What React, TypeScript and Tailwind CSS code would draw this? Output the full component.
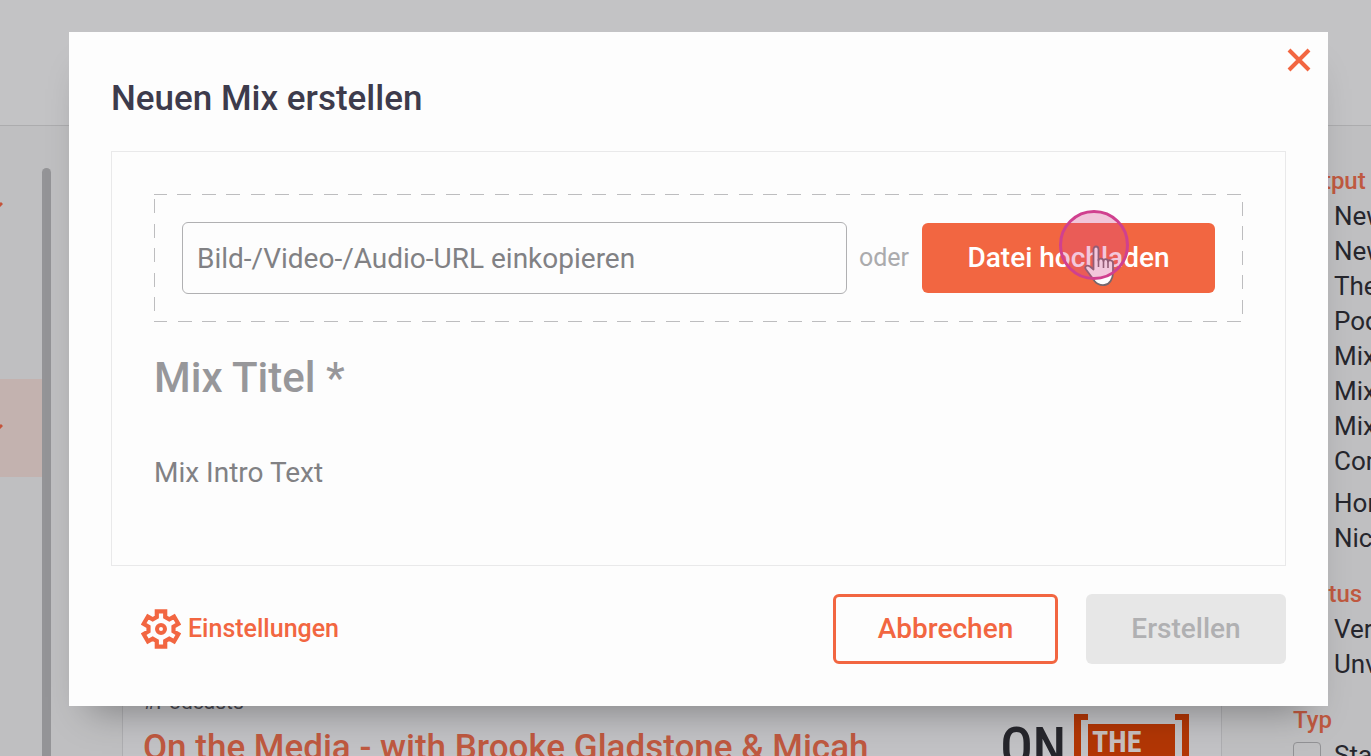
import React, { useState } from "react";

const outputGroups = [
  ["News", "News", "Themen", "Podcasts", "Mix", "Mix", "Mix", "Community"],
  ["Home", "Nicht"],
];

const GEAR_POINTS = [0, 60, 120, 180, 240, 300]
  .flatMap((deg) => {
    const a = (deg * Math.PI) / 180;
    return [
      [-4.2, -12],
      [-4.2, -17.6],
      [4.2, -17.6],
      [4.2, -12],
    ].map(([x, y]) => {
      const px = x * Math.cos(a) - y * Math.sin(a) + 20;
      const py = x * Math.sin(a) + y * Math.cos(a) + 20;
      return `${px.toFixed(1)},${py.toFixed(1)}`;
    });
  })
  .join(" ");

function GearIcon() {
  return (
    <svg
      className="w-10 h-10"
      viewBox="0 0 40 40"
      fill="none"
      stroke="currentColor"
      strokeWidth="4.2"
    >
      <polygon points={GEAR_POINTS} />
      <circle cx="20" cy="20" r="4" strokeWidth="4" />
    </svg>
  );
}

function CloseIcon() {
  return (
    <svg
      className="w-6 h-6"
      viewBox="0 0 24 24"
      fill="none"
      stroke="currentColor"
      strokeWidth="4"
    >
      <path d="M2 2l20 20M22 2L2 22" />
    </svg>
  );
}

function HandCursor() {
  return (
    <svg className="w-8 h-11" viewBox="0 0 32 44">
      <path
        d="M9.500 5.500c0-4 5-4 5 0v11c0-2.500 5-2.500 5 0.500c0-2.500 4.500-2.500 4.500 0.500c0.500-2 5-1.500 5 1.500v9c0 7-3.500 12.500-8.500 13c-4 0.500-7.500-1-10-4c-3-4-5-7-8.500-11.500c-2-3 1-5 4-3l3.500 3z"
        fill="#ffffff"
        stroke="#75676d"
        strokeWidth="1.800"
        strokeLinejoin="round"
      />
      <path d="M14.500 15v8M19.500 16v8M24 17v7" stroke="#75676d" strokeWidth="1.600" />
    </svg>
  );
}

function Chevron() {
  return (
    <svg className="w-3 h-2 -ml-[9px]" viewBox="0 0 12 8" fill="none">
      <path d="M1 1l5 5 5-5" stroke="#c4533a" strokeWidth="3" />
    </svg>
  );
}

function FilterOption({ label }: { label: string }) {
  return (
    <label className="flex items-center gap-[13px] h-[35px]">
      <input
        type="checkbox"
        className="appearance-none shrink-0 w-7 h-7 rounded border border-[#929295]"
      />
      {label}
    </label>
  );
}

function PageBehind() {
  return (
    <div className="h-full flex flex-col bg-[#bfbfc1]">
      <header className="h-[126px] shrink-0 bg-[#c3c3c5] border-b border-[#acacae]" />

      <div className="flex flex-1 min-h-0">
        {/* Sidebar */}
        <aside className="w-[42px] shrink-0">
          <div className="h-40 flex items-center">
            <Chevron />
          </div>
          <div className="mt-[93px] h-[98px] flex items-center bg-[#c3b2af]">
            <Chevron />
          </div>
        </aside>
        <div className="w-[9px] shrink-0 mt-[42px] rounded-t-full bg-[#949497]" />

        {/* Article list */}
        <main className="flex-1 min-w-0 pl-[71px] overflow-hidden">
          <article className="flex justify-between h-[760px] pt-[562px] pl-5 pr-8 bg-[#c2c2c5] border-x border-[#aeaeb1]">
            <div className="whitespace-nowrap">
              <p className="text-[21px] leading-7 text-[#4a4a52]">#Podcasts</p>
              <h2 className="mt-3 text-[35px] leading-10 font-medium text-[#bf5940]">
                On the Media - with Brooke Gladstone &amp; Micah
              </h2>
            </div>
            {/* Podcast cover */}
            <div className="flex gap-2 mt-[26px] font-['Roboto_Condensed','Liberation_Sans_Narrow','Roboto',sans-serif] font-bold">
              <span className="mt-2 text-[54px] leading-[50px] font-medium text-[#26262c]">
                ON
              </span>
              <div className="flex h-20">
                <div className="w-[14px] border-l-[7px] border-t-[6px] border-[#b23605]" />
                <div className="w-[87px] mt-2.5 pl-1 pt-1 bg-[#b23605] text-[30px] leading-7 text-[#c8c0bf]">
                  THE
                </div>
                <div className="w-[14px] border-r-[7px] border-t-[6px] border-[#b23605]" />
              </div>
            </div>
          </article>
        </main>

        {/* Filters */}
        <aside className="w-[149px] shrink-0 pl-[71px] pt-[38px] text-[26px] leading-[35px] text-[#26262d] whitespace-nowrap overflow-hidden">
          <h3 className="text-[24px] font-medium text-[#bf5940]">Output</h3>
          {outputGroups.map((group, i) => (
            <div key={i} className="mb-[7px]">
              {group.map((label, j) => (
                <FilterOption key={j} label={label} />
              ))}
            </div>
          ))}
          <h3 className="mt-[21px] text-[24px] font-medium text-[#bf5940]">Status</h3>
          <FilterOption label="Veröffentlicht" />
          <FilterOption label="Unveröffentlicht" />
          <h3 className="mt-[21px] text-[24px] font-medium text-[#bf5940]">Typ</h3>
          <FilterOption label="Standard" />
        </aside>
      </div>
    </div>
  );
}

export default function App() {
  const [url, setUrl] = useState("");
  const [title, setTitle] = useState("");
  const [intro, setIntro] = useState("");

  return (
    <div className="relative h-screen overflow-hidden font-['Roboto',sans-serif]">
      <PageBehind />

      <div className="absolute inset-0 pt-8 pl-[69px] pr-[43px]">
        <div
          role="dialog"
          aria-labelledby="dialog-title"
          className="relative px-[42px] pt-[45px] pb-[42px] bg-[#fdfdfd] shadow-[0_24px_36px_-20px_rgba(0,0,0,0.35)]"
        >
          <button
            aria-label="Schließen"
            className="absolute top-4 right-[17px] text-[#f26641]"
          >
            <CloseIcon />
          </button>

          <h1
            id="dialog-title"
            className="text-[35px] leading-[44px] font-medium text-[#3d3b4c]"
          >
            Neuen Mix erstellen
          </h1>

          <div className="mt-[30px] px-[42px] pt-[42px] pb-[74px] border border-[#e9e9ea]">
            {/* Upload area */}
            <div className="relative flex items-center p-7">
              <svg
                className="absolute inset-0 w-full h-full overflow-hidden pointer-events-none"
                shapeRendering="crispEdges"
              >
                <rect
                  width="100%"
                  height="100%"
                  fill="none"
                  stroke="#bdbdbf"
                  strokeWidth="2"
                  strokeDasharray="14 10.4"
                  strokeDashoffset="1"
                />
              </svg>
              <input
                type="text"
                aria-label="Medien-URL"
                value={url}
                onChange={(e) => setUrl(e.target.value)}
                placeholder="Bild-/Video-/Audio-URL einkopieren"
                className="relative flex-1 min-w-0 h-[72px] px-[14px] text-[28px] rounded-md border border-[#b0b0b2] placeholder:text-[#818184]"
              />
              <span className="pl-3 pr-[13px] text-[25px] text-[#ababad]">oder</span>
              <div className="relative">
                <button className="w-[293px] h-[70px] rounded-md bg-[#f26641] text-[28px] font-medium text-white">
                  Datei hochladen
                </button>
                {/* Pointer with click highlight */}
                <div className="absolute left-[162px] top-[21px] pointer-events-none">
                  <HandCursor />
                </div>
                <div className="absolute left-[137px] -top-[13px] w-[70px] h-[70px] rounded-full border-3 border-[#d0408f] bg-[#d7468c]/30 pointer-events-none" />
              </div>
            </div>

            <input
              type="text"
              aria-label="Mix Titel"
              value={title}
              onChange={(e) => setTitle(e.target.value)}
              placeholder="Mix Titel *"
              className="block w-full mt-[29px] h-[52px] text-[42px] font-medium placeholder:text-[#97979a]"
            />
            <input
              type="text"
              aria-label="Mix Intro Text"
              value={intro}
              onChange={(e) => setIntro(e.target.value)}
              placeholder="Mix Intro Text"
              className="block w-full mt-[52px] h-9 text-[28px] placeholder:text-[#818184]"
            />
          </div>

          {/* Footer actions */}
          <div className="flex items-center gap-7 mt-7">
            <button className="flex items-center gap-[7px] ml-[30px] mr-auto text-[25px] font-medium text-[#f26641]">
              <GearIcon />
              Einstellungen
            </button>
            <button className="w-[225px] h-[70px] rounded-md border-3 border-[#f26641] text-[28px] font-medium text-[#f26641]">
              Abbrechen
            </button>
            <button
              disabled
              className="w-[200px] h-[70px] rounded-md bg-[#e7e7e7] text-[28px] font-medium text-[#b0b0b2]"
            >
              Erstellen
            </button>
          </div>
        </div>
      </div>
    </div>
  );
}
